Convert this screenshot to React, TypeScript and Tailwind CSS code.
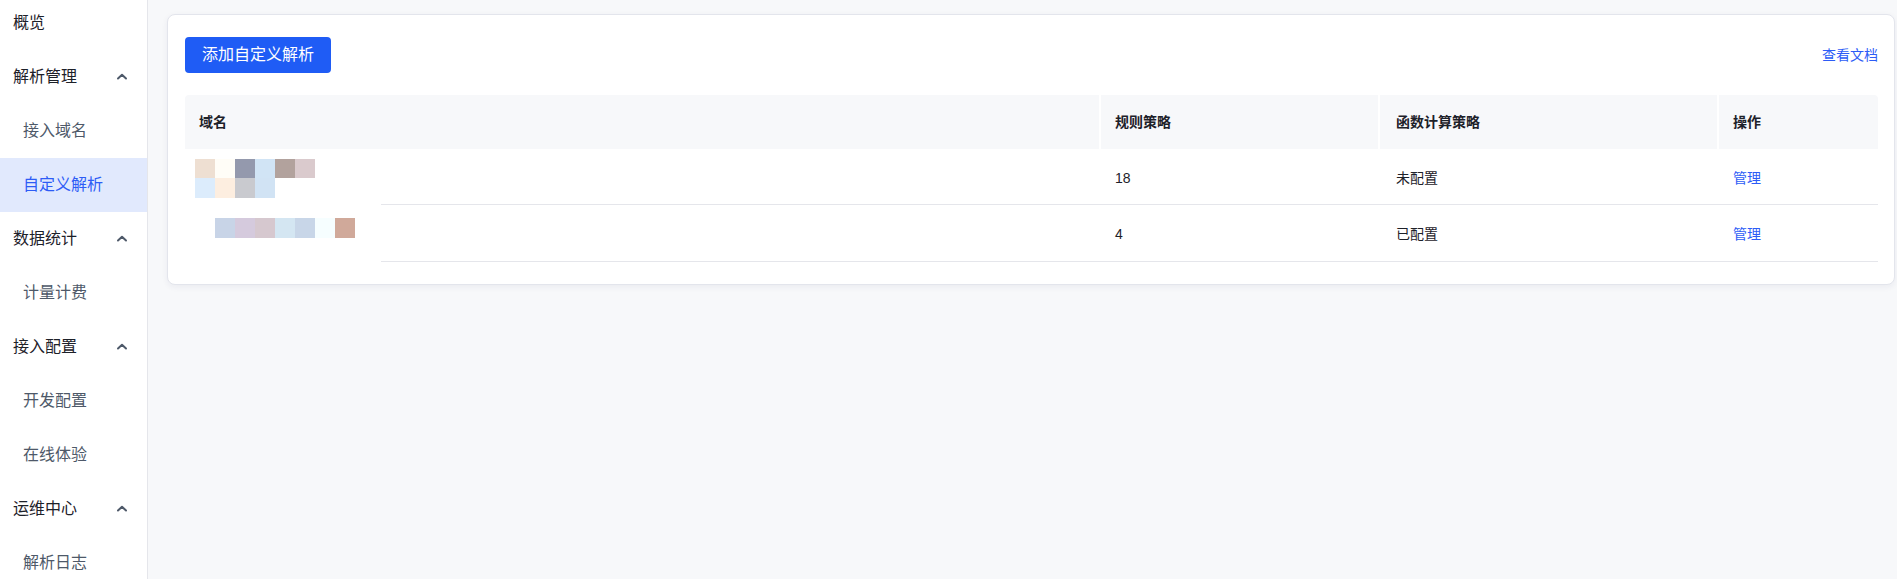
import React from "react";

type NavItem = { label: string; sub?: boolean; group?: boolean; active?: boolean };

const NAV: NavItem[] = [
  { label: "概览" },
  { label: "解析管理", group: true },
  { label: "接入域名", sub: true },
  { label: "自定义解析", sub: true, active: true },
  { label: "数据统计", group: true },
  { label: "计量计费", sub: true },
  { label: "接入配置", group: true },
  { label: "开发配置", sub: true },
  { label: "在线体验", sub: true },
  { label: "运维中心", group: true },
  { label: "解析日志", sub: true },
];

function Chevron() {
  return (
    <svg width="12" height="12" viewBox="0 0 12 12" fill="none" className="text-[#4e5969]">
      <polyline points="2,7.5 6,3.8 10,7.5" stroke="currentColor" strokeWidth="2" strokeLinecap="round" strokeLinejoin="round" />
    </svg>
  );
}

function Sidebar() {
  return (
    <aside className="w-[148px] shrink-0 bg-white border-r border-[#e5e6eb] overflow-hidden">
      <div className="-mt-[4px]">
        {NAV.map((item) => (
          <div
            key={item.label}
            className={
              "h-[54px] flex items-center justify-between pr-[19px] text-[16px] " +
              (item.sub ? "pl-[23px] " : "pl-[13px] ") +
              (item.active
                ? "bg-[#e1e9fd] text-[#2d5cf6]"
                : item.sub
                ? "text-[#4e5969]"
                : "text-[#1d2129]")
            }
          >
            <span>{item.label}</span>
            {item.group && <Chevron />}
          </div>
        ))}
      </div>
    </aside>
  );
}

function Blocks({ colors, h }: { colors: string[]; h: string }) {
  return (
    <div className="flex">
      {colors.map((c, i) => (
        <div key={i} className={"w-[20px] " + h} style={{ backgroundColor: c }} />
      ))}
    </div>
  );
}

const rows = [
  { rules: "18", fn: "未配置", h: "h-[56px]" },
  { rules: "4", fn: "已配置", h: "h-[57px]" },
];

export default function App() {
  return (
    <div
      className="flex h-[579px] w-full bg-[#f7f8fa]"
      style={{ fontFamily: '"Liberation Sans", "Noto Sans CJK SC", sans-serif' }}
    >
      <Sidebar />
      <main className="flex-1 pl-[19px] pr-[2px] pt-[14px]">
        <div className="bg-white rounded-lg border border-[#e3e5ec] shadow-[0_2px_6px_rgba(30,40,80,0.06)] pl-[17px] pr-[16px] pt-[22px] pb-[22px]">
          <div className="flex items-center justify-between">
            <button className="h-[36px] px-[17px] rounded-[4px] bg-[#1f5cf5] text-white text-[16px]">
              添加自定义解析
            </button>
            <a className="text-[14px] text-[#2d5cf6]">查看文档</a>
          </div>

          <div className="mt-[22px]">
            <div className="flex h-[54px] gap-[2px] text-[14px] font-bold text-[#1d2129]">
              <div className="w-[914px] bg-[#f7f8fa] rounded-tl-[4px] flex items-center pl-[14px]">域名</div>
              <div className="w-[277px] bg-[#f7f8fa] flex items-center pl-[14px]">规则策略</div>
              <div className="w-[337px] bg-[#f7f8fa] flex items-center pl-[16px]">函数计算策略</div>
              <div className="flex-1 bg-[#f7f8fa] rounded-tr-[4px] flex items-center pl-[14px]">操作</div>
            </div>

            {rows.map((r, idx) => (
              <div key={idx} className={"flex text-[14px] text-[#1d2129] " + r.h}>
                <div className="w-[196px] shrink-0">
                  {idx === 0 ? (
                    <div className="pt-[10px] pl-[10px]">
                      <Blocks h="h-[19px]" colors={["#eedfd2", "#fffdf7", "#9499ad", "#d1e4f5", "#b2a29d", "#dacacd"]} />
                      <Blocks h="h-[20px]" colors={["#dcecfc", "#fdeee0", "#c9cacf", "#d1e3f4"]} />
                    </div>
                  ) : (
                    <div className="pt-[13px] pl-[30px]">
                      <Blocks
                        h="h-[20px]"
                        colors={["#c8d4e7", "#d5cadd", "#d6c8cf", "#d4e6f2", "#c8d6e8", "#f6feff", "#d0a99a"]}
                      />
                    </div>
                  )}
                </div>
                <div className="flex-1 flex border-b border-[#e5e6eb] pt-[3px]">
                  <div className="w-[720px]" />
                  <div className="w-[279px] flex items-center pl-[14px]">{r.rules}</div>
                  <div className="w-[339px] flex items-center pl-[16px]">{r.fn}</div>
                  <div className="flex-1 flex items-center pl-[14px] text-[#2d5cf6]">管理</div>
                </div>
              </div>
            ))}
          </div>
        </div>
      </main>
    </div>
  );
}
